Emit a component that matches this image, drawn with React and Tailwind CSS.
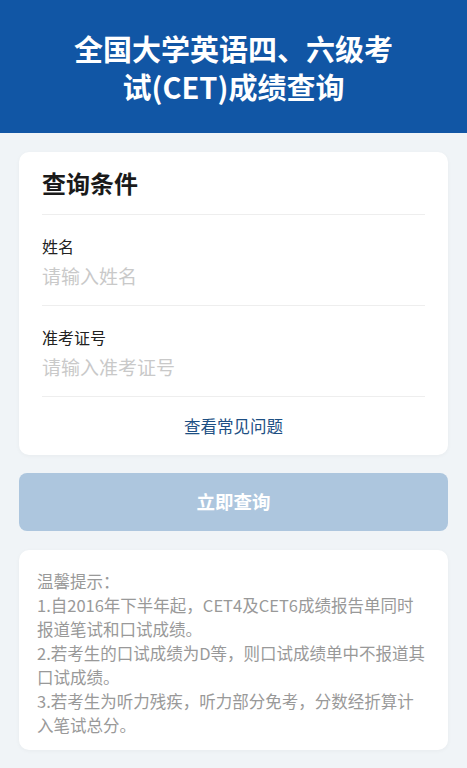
import React from 'react';

const FONT = { fontFamily: '"Noto Sans CJK SC", "Noto Sans", sans-serif' };

const Field = ({ label, placeholder }) => (
  <div className="pt-[19px] pb-[14px] border-b border-[#eeeeee]">
    <div className="text-[16px] leading-[24px] text-[#222222]">{label}</div>
    <input
      className="mt-[3px] block w-full h-[30px] text-[19px] leading-[30px] outline-none bg-transparent placeholder:text-[#c9c9c9]"
      placeholder={placeholder}
      style={FONT}
    />
  </div>
);

export default function App() {
  return (
    <div className="min-h-[768px] bg-[#f0f4f7]" style={FONT}>
      {/* Header */}
      <div className="bg-[#1156a5] h-[133px] flex items-center justify-center px-[50px]">
        <h1 className="text-white text-[29px] font-bold leading-[38px] text-center">
          全国大学英语四、六级考<br />试(CET)成绩查询
        </h1>
      </div>

      <div className="px-[19px] pt-[19px] pb-[19px]">
        {/* Query card */}
        <div className="bg-white rounded-[10px] px-[23px] shadow-[0_1px_4px_rgba(0,0,0,0.04)]">
          <div className="h-[63px] flex items-center border-b border-[#eeeeee]">
            <h2 className="text-[24px] font-bold text-[#1a1a1a] leading-[32px]">查询条件</h2>
          </div>
          <Field label="姓名" placeholder="请输入姓名" />
          <Field label="准考证号" placeholder="请输入准考证号" />
          <div className="h-[58px] flex items-center justify-center">
            <a className="text-[16.5px] text-[#1d4f83] leading-[24px] cursor-pointer">查看常见问题</a>
          </div>
        </div>

        {/* Submit */}
        <button
          className="mt-[18px] w-full h-[58px] rounded-[8px] bg-[#adc6de] text-white text-[18.5px] font-bold"
          style={FONT}
        >
          立即查询
        </button>

        {/* Tips */}
        <div className="mt-[19px] bg-white rounded-[10px] pl-[18px] pr-[10px] pt-[19px] pb-[13px] text-[16.5px] leading-[24px] text-[#999999] shadow-[0_1px_4px_rgba(0,0,0,0.04)]">
          <p>温馨提示：</p>
          <p>1.自2016年下半年起，CET4及CET6成绩报告单同时<br />报道笔试和口试成绩。</p>
          <p>2.若考生的口试成绩为D等，则口试成绩单中不报道其<br />口试成绩。</p>
          <p>3.若考生为听力残疾，听力部分免考，分数经折算计<br />入笔试总分。</p>
        </div>
      </div>
    </div>
  );
}
